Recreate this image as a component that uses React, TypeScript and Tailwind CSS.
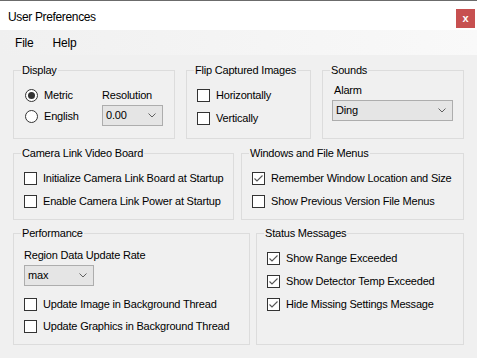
import type { ReactNode } from 'react';

function Group({ title, className, children }: { title: string; className: string; children?: ReactNode }) {
  return (
    <div className={`relative border border-[#dcdcdc] ${className}`}>
      <span className="absolute -top-[7px] left-[7px] bg-[#f0f0f0] px-[1px] leading-[13px]">{title}</span>
      {children}
    </div>
  );
}

function CheckBox({ label, checked = false, h = 'h-[22px]' }: { label: string; checked?: boolean; h?: string }) {
  return (
    <div className={`flex items-center gap-[6px] ${h}`}>
      <div className="w-[13px] h-[13px] border border-[#333] bg-white flex items-center justify-center shrink-0">
        {checked && (
          <svg width="11" height="11" viewBox="0 0 11 11">
            <polyline points="1.5,5.5 4,8 9.5,2.5" fill="none" stroke="#555" strokeWidth="1.1" />
          </svg>
        )}
      </div>
      <span className="leading-[13px] whitespace-nowrap">{label}</span>
    </div>
  );
}

function Radio({ label, checked = false }: { label: string; checked?: boolean }) {
  return (
    <div className="flex items-center gap-[6px] h-[21px]">
      <div className="w-[13px] h-[13px] rounded-full border border-[#333] bg-white flex items-center justify-center shrink-0">
        {checked && <div className="w-[7px] h-[7px] rounded-full bg-[#333]" />}
      </div>
      <span className="leading-[13px]">{label}</span>
    </div>
  );
}

function Dropdown({ value, className }: { value: string; className: string }) {
  return (
    <div className={`flex items-center justify-between border border-[#adadad] bg-[#e5e5e5] pl-[3px] pr-[6px] h-[21px] ${className}`}>
      <span className="leading-[13px]">{value}</span>
      <svg width="8" height="5" viewBox="0 0 8 5">
        <polyline points="0.5,0.5 4,4 7.5,0.5" fill="none" stroke="#606060" strokeWidth="1" />
      </svg>
    </div>
  );
}

export default function App() {
  return (
    <div className="w-[477px] h-[358px] bg-[#f0f0f0] text-[11px] tracking-[-0.2px] text-black flex flex-col overflow-hidden" style={{ fontFamily: '"Liberation Sans", Arial, sans-serif' }}>
      <div className="h-[30px] bg-white border-t border-[#6b6b6b] flex items-start justify-between">
        <span className="text-[12px] tracking-[-0.35px] ml-[8px] mt-[9px] leading-[14px]">User Preferences</span>
        <div className="w-[19px] h-[19px] mt-[8px] mr-[2px] bg-[#c75050] text-white font-bold text-[11px] flex items-center justify-center leading-none">x</div>
      </div>
      <div className="h-[25px] bg-gradient-to-r from-[#f0f0f0] to-[#f9f9f9] flex items-center text-[12px]">
        <span className="ml-[15px]">File</span>
        <span className="ml-[19px]">Help</span>
      </div>

      <div className="flex mt-[15px] ml-[13px] gap-[11px]">
        <Group title="Display" className="w-[162px] h-[69px]">
          <div className="flex pt-[14px]">
            <div className="ml-[11px] w-[77px] flex flex-col">
              <Radio label="Metric" checked />
              <Radio label="English" />
            </div>
            <div className="flex flex-col">
              <div className="h-[20px] flex items-center">Resolution</div>
              <Dropdown value="0.00" className="w-[61px]" />
            </div>
          </div>
        </Group>
        <Group title="Flip Captured Images" className="w-[125px] h-[69px]">
          <div className="pt-[13px] ml-[10px]">
            <CheckBox label="Horizontally" h="h-[23px]" />
            <CheckBox label="Vertically" h="h-[23px]" />
          </div>
        </Group>
        <Group title="Sounds" className="w-[142px] h-[69px]">
          <div className="pt-[10px] ml-[9px]">
            <div className="h-[18px] flex items-center ml-[2px]">Alarm</div>
            <Dropdown value="Ding" className="w-[121px] mt-[1px]" />
          </div>
        </Group>
      </div>

      <div className="flex mt-[14px] ml-[13px] gap-[7px]">
        <Group title="Camera Link Video Board" className="w-[221px] h-[67px]">
          <div className="pt-[13px] ml-[10px]">
            <CheckBox label="Initialize Camera Link Board at Startup" h="h-[23px]" />
            <CheckBox label="Enable Camera Link Power at Startup" h="h-[23px]" />
          </div>
        </Group>
        <Group title="Windows and File Menus" className="w-[223px] h-[67px]">
          <div className="pt-[13px] ml-[10px]">
            <CheckBox label="Remember Window Location and Size" checked h="h-[23px]" />
            <CheckBox label="Show Previous Version File Menus" h="h-[23px]" />
          </div>
        </Group>
      </div>

      <div className="flex mt-[13px] ml-[13px] gap-[6px]">
        <Group title="Performance" className="w-[237px] h-[112px]">
          <div className="pt-[12px] ml-[10px]">
            <div className="h-[18px] flex items-center">Region Data Update Rate</div>
            <Dropdown value="max" className="w-[70px] mt-[1px]" />
            <div className="mt-[7px]">
              <CheckBox label="Update Image in Background Thread" />
              <CheckBox label="Update Graphics in Background Thread" />
            </div>
          </div>
        </Group>
        <Group title="Status Messages" className="w-[208px] h-[112px]">
          <div className="pt-[13px] ml-[10px]">
            <CheckBox label="Show Range Exceeded" checked h="h-[23px]" />
            <CheckBox label="Show Detector Temp Exceeded" checked h="h-[23px]" />
            <CheckBox label="Hide Missing Settings Message" checked h="h-[23px]" />
          </div>
        </Group>
      </div>
    </div>
  );
}
